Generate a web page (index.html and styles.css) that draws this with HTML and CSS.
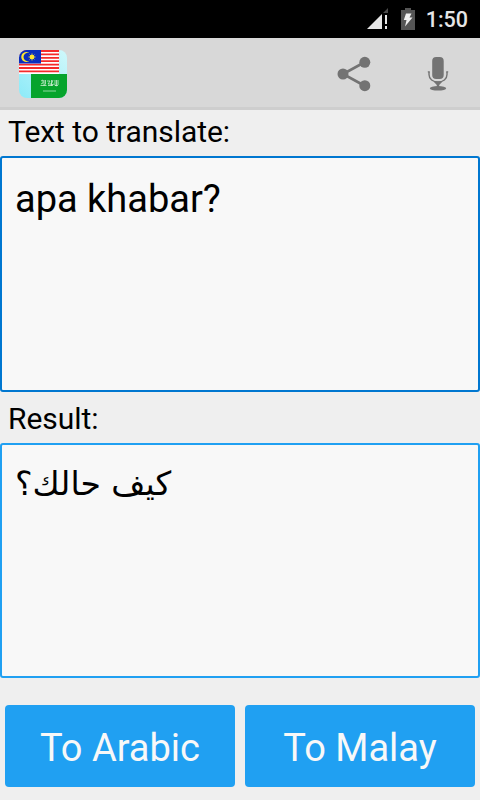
FILE: index.html
```html
<!DOCTYPE html>
<html lang="en">
<head>
    <meta charset="UTF-8">
    <meta name="viewport" content="width=device-width, initial-scale=1.0">
    <title>Malay Arabic Translator</title>
    <link rel="stylesheet" href="styles.css">
</head>
<body>
    <div class="status-bar">
        <svg class="signal" width="22" height="22" viewBox="0 0 22 22">
            <path d="M0 21L15 6v15z" fill="#e6e6e6"/>
            <path d="M15 6l6-6v5h-5z" fill="#4a4a4a"/>
            <path d="M18 7h2v9h-2zM18 18h2v3h-2z" fill="#e6e6e6"/>
        </svg>
        <svg class="battery" width="14" height="22" viewBox="0 0 14 22">
            <path d="M4 0h6v2h4v20H0V2h4z" fill="#555"/>
            <path d="M5 5.500h5.500L8.500 9.500H11.500L4 18.500l1.500-6.500H2.800z" fill="#f0f0f0"/>
        </svg>
        <span class="clock">1:50</span>
    </div>

    <header class="action-bar">
        <svg class="logo" width="48" height="48" viewBox="0 0 48 48">
            <defs>
                <linearGradient id="sky" x1="0" y1="1" x2="1" y2="0">
                    <stop offset="0" stop-color="#8ceaf8"/>
                    <stop offset="1" stop-color="#d0f8fb"/>
                </linearGradient>
                <clipPath id="round"><rect width="48" height="48" rx="8"/></clipPath>
            </defs>
            <g clip-path="url(#round)">
                <rect width="48" height="48" fill="url(#sky)"/>
                <!-- Malaysia -->
                <rect width="40" height="24" fill="#fff"/>
                <path d="M0 1h40M0 4.400h40M0 7.800h40M0 11.200h40M0 14.600h40M0 18h40M0 21.400h40" stroke="#f52a2a" stroke-width="1.800"/>
                <rect width="22" height="13.500" fill="#0a2ebd"/>
                <path d="M10.500 3.200a5 5 0 1 0 0 7.600a4.200 4.200 0 1 1 0-7.600z" fill="#ffe630"/>
                <circle cx="13" cy="7" r="2.300" fill="#ffe630"/>
                <path d="M13 3.500v7M9.500 7h7M10.600 4.600l4.800 4.800M15.400 4.600l-4.800 4.800" stroke="#ffe630" stroke-width=".8"/>
                <!-- Saudi Arabia -->
                <rect x="12" y="24" width="36" height="24" fill="#06a42c"/>
                <path d="M22 31l2-1v3l-2 1M25 30v5M26.500 30v4l-2 2M28 31h3l-2 3h3M32.500 30v6M34 30l-2 5 3-1M36 30v5M37.500 30v6l-2-1M39 30v5M21.500 35.500h6M29 35.500h5M36 35.500h3" fill="none" stroke="#c9edcf" stroke-width=".8"/>
                <path d="M24 41h13" stroke="#8fd9a0" stroke-width="1"/>
            </g>
        </svg>
        <div class="actions">
            <svg class="share" width="34" height="36" viewBox="0 0 34 36">
                <path d="M28 6L6 18l22 12" fill="none" stroke="#737373" stroke-width="2.600"/>
                <circle cx="27.800" cy="6.300" r="5.500" fill="#737373"/>
                <circle cx="6" cy="18" r="5.500" fill="#737373"/>
                <circle cx="27.800" cy="29.700" r="5.500" fill="#737373"/>
            </svg>
            <svg class="mic" width="22" height="34" viewBox="0 0 22 34">
                <rect x="5.200" y="0" width="11.500" height="22" rx="4" fill="#737373"/>
                <path d="M2 15v2.500c0 4.700 4 7.500 9 7.500s9-2.800 9-7.500V15" fill="none" stroke="#737373" stroke-width="1.400"/>
                <path d="M.8 14.900h2M19.200 14.900h2" stroke="#737373" stroke-width="1.300"/>
                <path d="M6.500 24.500h9L12.200 28v2H9.800v-2z" fill="#737373"/>
                <ellipse cx="11" cy="31.300" rx="8.200" ry="2.300" fill="#737373"/>
            </svg>
        </div>
    </header>

    <main class="content">
        <div class="label">Text to translate:</div>
        <div class="text-box focused">apa khabar?</div>
        <div class="label result-label">Result:</div>
        <div class="text-box arabic" lang="ar" dir="rtl">كيف حالك؟</div>
        <div class="buttons">
            <button class="btn">To Arabic</button>
            <button class="btn">To Malay</button>
        </div>
    </main>
</body>
</html>
```
FILE: styles.css
```css
* {
    margin: 0;
    padding: 0;
    box-sizing: border-box;
}

body {
    width: 480px;
    height: 800px;
    overflow: hidden;
    display: flex;
    flex-direction: column;
    font-family: Roboto, sans-serif;
    background: #efefef;
    color: #000;
}

.status-bar {
    height: 38px;
    background: #000;
    display: flex;
    justify-content: flex-end;
    align-items: flex-start;
    padding: 8px 12px 0 0;
}

.battery {
    margin-left: 12px;
}

.clock {
    margin-left: 11px;
    font-size: 21.500px;
    font-weight: 500;
    line-height: 24px;
    color: #e6e6e6;
}

.action-bar {
    height: 72px;
    background: #d8d8d8;
    border-bottom: 3px solid #cecece;
    display: flex;
    justify-content: space-between;
    align-items: flex-start;
    padding: 12px 31px 0 19px;
}

.actions {
    display: flex;
    padding-top: 6px;
}

.mic {
    margin-left: 56px;
    margin-top: 1px;
}

.content {
    flex: 1;
    display: flex;
    flex-direction: column;
}

.label {
    height: 46px;
    padding-left: 8px;
    font-size: 30px;
    line-height: 44px;
    letter-spacing: -0.05px;
}

.result-label {
    height: 51px;
    line-height: 54px;
}

.text-box {
    height: 236px;
    padding: 18px 13px;
    border: 2px solid #20a0f2;
    border-radius: 3px;
    background: #f8f8f8;
    font-size: 38px;
    line-height: 46px;
}

.focused {
    border-color: #0077d0;
}

.arabic {
    height: 235px;
    padding-top: 16px;
    text-align: left;
    font-family: "DejaVu Sans", sans-serif;
    font-size: 33px;
}

.buttons {
    display: flex;
    gap: 10px;
    padding: 27px 5px 0;
}

.btn {
    flex: 1;
    height: 82px;
    border: none;
    border-radius: 4px;
    background: #20a0f2;
    color: #f8f8f8;
    font-family: inherit;
    font-size: 38px;
    padding-top: 4px;
}
```
